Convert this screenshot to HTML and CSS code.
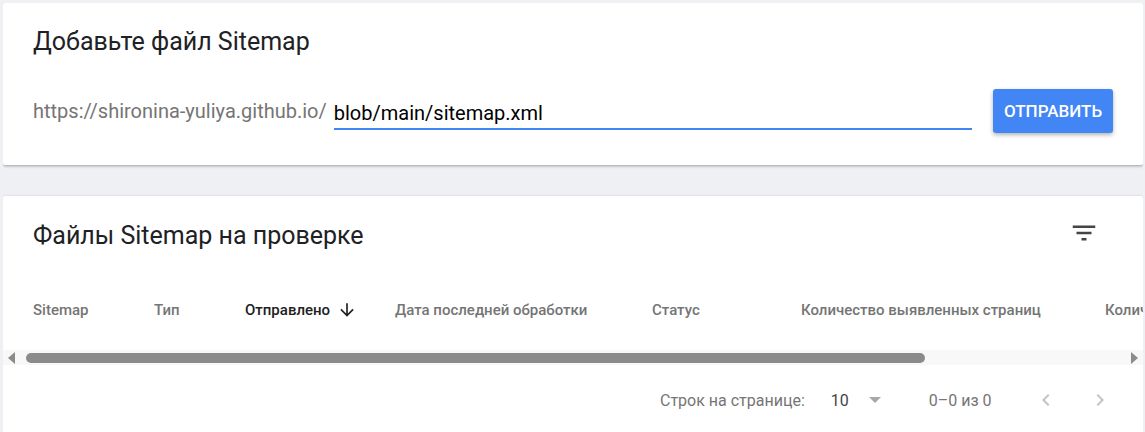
FILE: index.html
```html
<!DOCTYPE html>
<html lang="ru">
<head>
    <meta charset="UTF-8">
    <meta name="viewport" content="width=device-width, initial-scale=1.0">
    <title>Файлы Sitemap</title>
    <link rel="stylesheet" href="styles.css">
</head>
<body>

    <div class="card card-add">
        <h2 class="card-title">Добавьте файл Sitemap</h2>
        <form class="add-row" onsubmit="return false">
            <span class="prefix">https://shironina-yuliya.github.io/</span>
            <input type="text" class="url-input" value="blob/main/sitemap.xml">
            <button type="submit" class="btn-send">Отправить</button>
        </form>
    </div>

    <div class="card card-list">
        <div class="list-head">
            <h2 class="card-title">Файлы Sitemap на проверке</h2>
            <svg class="filter-icon" viewBox="0 0 24 24" width="30" height="30">
                <path d="M10 18h4v-2h-4v2zM3 6v2h18V6H3zm3 7h12v-2H6v2z" fill="#444"/>
            </svg>
        </div>

        <div class="table-head">
            <div class="col col-sitemap">Sitemap</div>
            <div class="col col-type">Тип</div>
            <div class="col col-sent active">Отправлено
                <svg class="sort-icon" viewBox="0 0 24 24" width="20" height="20">
                    <path d="M20 12l-1.41-1.41L13 16.17V4h-2v12.17l-5.58-5.59L4 12l8 8 8-8z" fill="#212121"/>
                </svg>
            </div>
            <div class="col col-date">Дата последней обработки</div>
            <div class="col col-status">Статус</div>
            <div class="col col-found">Количество выявленных страниц</div>
            <div class="col col-more">Количество видео</div>
        </div>

        <div class="hscroll">
            <span class="arrow arrow-left"></span>
            <div class="track"><div class="thumb"></div></div>
            <span class="arrow arrow-right"></span>
        </div>

        <div class="pager">
            <span class="pager-label">Строк на странице:</span>
            <span class="pager-size">10</span>
            <span class="pager-caret"></span>
            <span class="pager-range">0–0 из 0</span>
            <svg class="pager-btn" viewBox="0 0 24 24" width="24" height="24">
                <path d="M15.41 7.41L14 6l-6 6 6 6 1.41-1.41L10.83 12z" fill="#c4c4c4"/>
            </svg>
            <svg class="pager-btn pager-next" viewBox="0 0 24 24" width="24" height="24">
                <path d="M10 6L8.59 7.41 13.17 12l-4.58 4.59L10 18l6-6z" fill="#c4c4c4"/>
            </svg>
        </div>
    </div>

</body>
</html>
```

FILE: styles.css
```css
body {
    font-family: Roboto, "Noto Sans", Arial, sans-serif;
    margin: 3px 2px 0 3px;
    background: #eef0f4;
    color: #202124;
    overflow: hidden;
}
.card {
    background: white;
    border-radius: 2px;
    box-shadow: 0 1px 3px rgba(0, 0, 0, 0.35);
}
.card-title {
    margin: 0;
    font-size: 25px;
    font-weight: 400;
    line-height: 28px;
    color: #202124;
}
.card-add {
    padding: 25px 30px 32px 30px;
}
.add-row {
    display: flex;
    align-items: center;
    height: 44px;
    margin-top: 33px;
}
.prefix {
    font-size: 20px;
    line-height: 24px;
    color: #757575;
}
.url-input {
    flex: 1;
    height: 32px;
    margin: 6px 21px 0 7px;
    padding: 0;
    border: none;
    border-bottom: 2px solid #4285f4;
    box-sizing: border-box;
    font-family: inherit;
    font-size: 20px;
    color: #000;
    outline: none;
}
.btn-send {
    width: 120px;
    height: 44px;
    border: none;
    border-radius: 3px;
    background: #4285f4;
    color: white;
    font-family: inherit;
    font-size: 17px;
    font-weight: 500;
    text-transform: uppercase;
    box-shadow: 0 2px 4px rgba(0, 0, 0, 0.3);
    cursor: pointer;
}
.card-list {
    margin-top: 31px;
    height: 260px;
    overflow: hidden;
}
.list-head {
    display: flex;
    align-items: center;
    justify-content: space-between;
    padding: 26px 44px 0 30px;
}
.filter-icon {
    margin-top: -6px;
}
.table-head {
    display: flex;
    align-items: center;
    height: 48px;
    margin-top: 36px;
    padding-left: 30px;
    white-space: nowrap;
    font-size: 15px;
    font-weight: 500;
    color: #757575;
}
.col {
    flex: none;
    display: flex;
    align-items: center;
}
.col-sitemap { width: 121px; }
.col-type { width: 91px; }
.col-sent { width: 150px; }
.col-date { width: 257px; }
.col-status { width: 149px; }
.col-found { width: 304px; }
.active {
    color: #212121;
}
.sort-icon {
    margin-left: 7px;
}
.hscroll {
    display: flex;
    align-items: center;
    height: 15px;
    margin-top: 16px;
    background: #f8f8f8;
}
.arrow {
    width: 0;
    height: 0;
    border-top: 6px solid transparent;
    border-bottom: 6px solid transparent;
}
.arrow-left {
    margin: 0 11px 0 5px;
    border-right: 7px solid #8b8b8b;
}
.arrow-right {
    margin: 0 5px 0 9px;
    border-left: 7px solid #8b8b8b;
}
.track {
    flex: 1;
}
.thumb {
    width: 899px;
    height: 10px;
    border-radius: 5px;
    background: #8b8b8b;
}
.pager {
    display: flex;
    align-items: center;
    height: 56px;
    margin-top: 7px;
    padding-left: 657px;
    font-size: 16px;
    color: #757575;
}
.pager-size {
    margin-left: 26px;
    color: #444;
}
.pager-caret {
    width: 0;
    height: 0;
    margin-left: 20px;
    border-left: 6px solid transparent;
    border-right: 6px solid transparent;
    border-top: 6px solid #a8a8a8;
}
.pager-range {
    margin-left: 48px;
}
.pager-btn {
    margin-left: 42px;
}
.pager-next {
    margin-left: 30px;
}
```
